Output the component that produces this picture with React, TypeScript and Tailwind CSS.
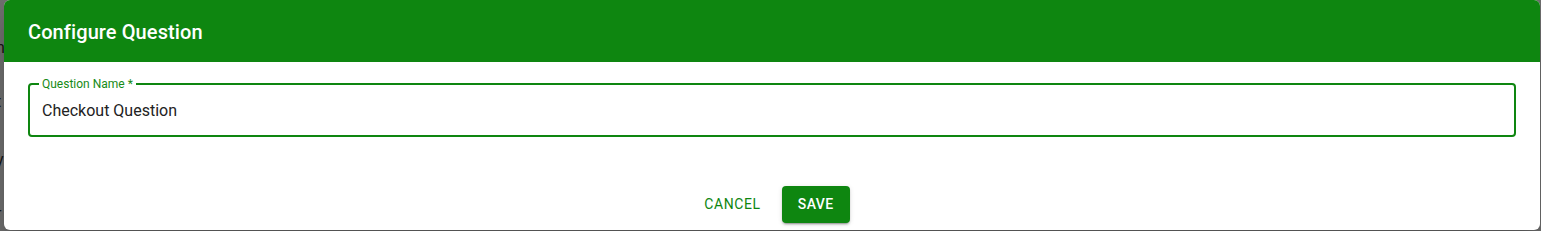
import { useEffect, useRef, useState } from 'react'

const font = { fontFamily: 'Roboto, "Liberation Sans", sans-serif' }

export default function App() {
  const [name, setName] = useState('Checkout Question')
  const inputRef = useRef<HTMLInputElement>(null)

  useEffect(() => {
    const el = inputRef.current
    if (!el) return
    el.focus()
    el.setSelectionRange(el.value.length, el.value.length)
  }, [])

  return (
    <div className="relative w-[1541px] h-[231px] overflow-hidden bg-[#6e6e6e]" style={font}>
      {/* page behind the backdrop */}
      <div className="absolute left-[-4px] top-0 flex flex-col text-[16px] text-[#141414] leading-none">
        <span className="mt-[40px]">n</span>
        <span className="mt-[38px]">t</span>
        <span className="mt-[42px]">y</span>
        <span className="mt-[38px]">r</span>
      </div>

      {/* dialog */}
      <div className="absolute left-[4px] top-0 w-[1536px] h-[230px] bg-white rounded-[6px] overflow-hidden shadow-[0_11px_15px_-7px_rgba(0,0,0,0.2),0_24px_38px_3px_rgba(0,0,0,0.14)] flex flex-col">
        <div className="h-[62px] bg-[#0e8610] px-[24px] flex items-center">
          <h2 className="text-white text-[20px] font-medium tracking-[0.1px] pt-[1px]">Configure Question</h2>
        </div>

        <div className="px-[24px] pt-[15px]">
          <fieldset className="relative h-[60px] border-2 border-[#0e8610] rounded-[4px] px-[8px] m-0">
            <legend className="px-[3px] ml-[1px] text-[12px] leading-[14px] text-[#168a16]">Question Name *</legend>
            <div className="flex items-center h-[38px] mt-[1px] pl-[4px]">
              <input
                ref={inputRef}
                value={name}
                onChange={e => setName(e.target.value)}
                className="w-full outline-none text-[16px] text-[#222] bg-transparent caret-black"
              />
            </div>
          </fieldset>
        </div>

        <div className="flex justify-center items-center gap-[13px] mt-auto mb-[7px] pl-[2px]">
          <button className="px-[8px] h-[36px] text-[14px] font-normal tracking-[0.6px] text-[#0e8610] rounded-[4px]">
            CANCEL
          </button>
          <button className="w-[68px] h-[37px] text-[14px] font-medium tracking-[0.4px] text-white bg-[#0e8610] rounded-[4px] shadow-[0_3px_1px_-2px_rgba(0,0,0,0.2),0_2px_2px_0_rgba(0,0,0,0.14),0_1px_5px_0_rgba(0,0,0,0.12)]">
            SAVE
          </button>
        </div>
      </div>
    </div>
  )
}
